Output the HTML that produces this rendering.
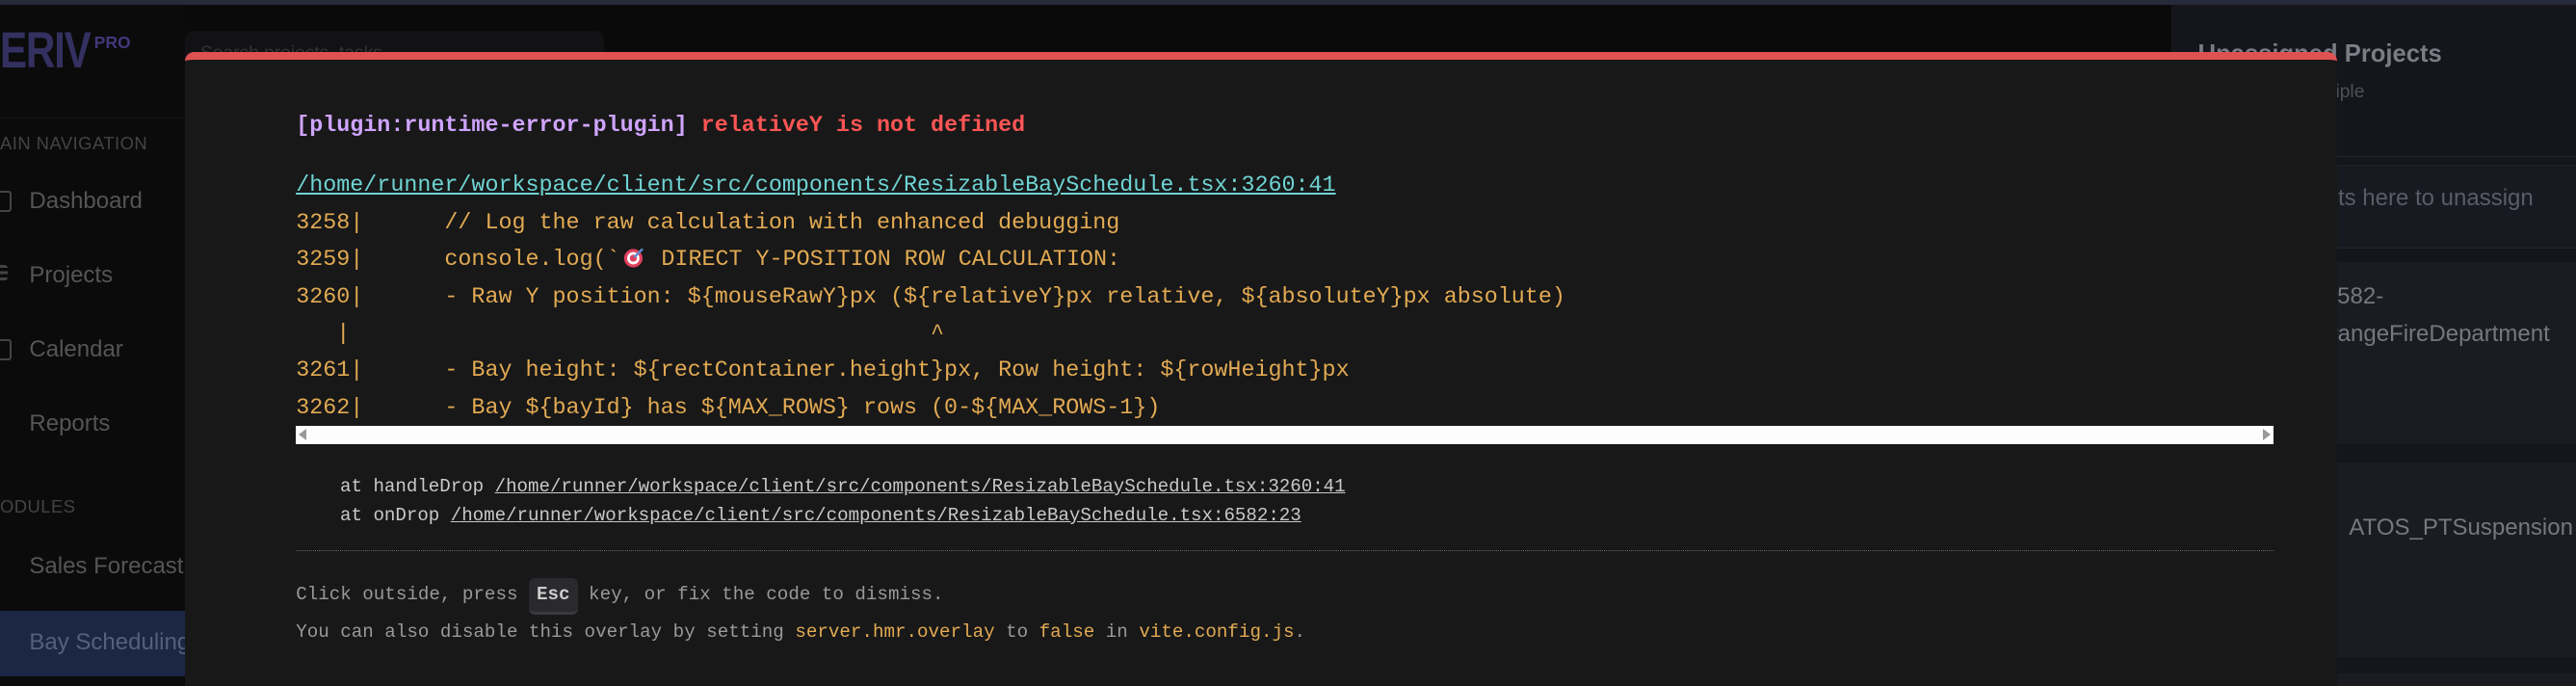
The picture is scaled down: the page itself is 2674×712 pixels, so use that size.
<!DOCTYPE html>
<html><head><meta charset="utf-8">
<style>
html,body{margin:0;padding:0;background:#0b0b0b;overflow:hidden}
body{width:2674px;height:712px}
#root{zoom:1.6;width:1672px;height:445px;position:relative;overflow:hidden;background:#0a0a0b;font-family:"Liberation Sans",sans-serif}
.abs{position:absolute}
.nav{position:absolute;left:19px;font-size:15px;color:#555558;white-space:nowrap}
.sec{position:absolute;left:0;font-size:11.5px;color:#444448;letter-spacing:.3px}
.ico{position:absolute;left:-4px;width:9px;height:11px;border:1.5px solid #444;border-radius:2px}
#ov{position:absolute;left:120px;top:34px;width:1396px;height:406px;background:#181818;border-top:5px solid #e05252;border-radius:6px 6px 0 0;font-family:"Liberation Mono",monospace}
.m{position:absolute;left:72px;white-space:pre;font-size:14.6px;line-height:24px}
.y{color:#e2aa53}
.s{position:absolute;left:72px;white-space:pre;font-size:11.95px;line-height:19px;color:#c9c9c9}
.s u{color:#c9c9c9}
.t{position:absolute;left:72px;white-space:pre;font-size:12px;line-height:20px;color:#999}
</style></head><body><div id="root">
<div class="abs" style="left:0;top:0;width:1672px;height:3px;background:#262a3b"></div>
<div class="abs" style="left:0;top:3px;width:120px;height:442px;background:#0b0b0b"></div>
<div class="abs" style="left:0;top:14px;font-size:33px;font-weight:bold;color:#343060;letter-spacing:-1px;transform:scaleX(.8);transform-origin:left">ERIV</div>
<div class="abs" style="left:61px;top:21px;font-size:11px;color:#41387a;font-weight:bold">PRO</div>
<div class="abs" style="left:120px;top:20px;width:272px;height:30px;background:#121215;border-radius:6px"></div>
<div class="abs" style="left:130px;top:28px;font-size:12px;color:#333">Search projects, tasks...</div>
<div class="abs" style="left:0;top:76px;width:120px;height:1px;background:#141414"></div>
<div class="sec" style="top:86px">AIN NAVIGATION</div>
<div class="ico" style="top:124px"></div><div class="nav" style="top:122px">Dashboard</div>
<div class="ico" style="top:172px;border:none;height:10px;background:linear-gradient(#444 0 2px,transparent 2px 4px,#444 4px 6px,transparent 6px 8px,#444 8px 10px)"></div><div class="nav" style="top:170px">Projects</div>
<div class="ico" style="top:220px"></div><div class="nav" style="top:218px">Calendar</div>
<div class="nav" style="top:266px">Reports</div>
<div class="sec" style="top:322px">ODULES</div>
<div class="nav" style="top:359px">Sales Forecast</div>
<div class="abs" style="left:0;top:396px;width:120px;height:43px;background:#1c2745"></div>
<div class="nav" style="top:408px;color:#56607a">Bay Scheduling</div>
<div class="abs" style="left:1409px;top:3px;width:263px;height:442px;background:#14161b"></div>
<div class="abs" style="left:1426px;top:26px;font-size:16px;font-weight:bold;color:#7a7d86;white-space:nowrap">Unassigned Projects</div>
<div class="abs" style="left:1450px;top:53px;font-size:12px;color:#4e5058;white-space:nowrap">Drag to multiple</div>
<div class="abs" style="left:1409px;top:101px;width:263px;height:1px;background:#22252c"></div>
<div class="abs" style="left:1418px;top:107px;width:254px;height:53px;background:#171a20;border-top:1px solid #22252c;border-bottom:1px solid #22252c"></div>
<div class="abs" style="left:1476px;top:120px;font-size:15px;color:#5a5d66;white-space:nowrap">projects here to unassign</div>
<div class="abs" style="left:1418px;top:170px;width:254px;height:118px;background:#1a1c22"></div>
<div class="abs" style="left:1508px;top:184px;font-size:15px;color:#75787f;white-space:nowrap">2582-</div>
<div class="abs" style="left:1500px;top:208px;font-size:15px;color:#75787f;white-space:nowrap">OrangeFireDepartment</div>
<div class="abs" style="left:1418px;top:300px;width:254px;height:126px;background:#1a1c22"></div>
<div class="abs" style="left:1524px;top:334px;font-size:15px;color:#75787f;white-space:nowrap">ATOS_PTSuspension</div>
<div class="abs" style="left:1418px;top:437px;width:254px;height:8px;background:#1a1c22"></div>
<div id="ov">
<div class="m" style="top:31px;font-weight:bold"><span style="color:#cfa4ff">[plugin:runtime-error-plugin]</span> <span style="color:#ff5555">relativeY is not defined</span></div>
<div class="m" style="top:70px;color:#6fd3d3"><u>/home/runner/workspace/client/src/components/ResizableBaySchedule.tsx:3260:41</u></div>
<div class="m y" style="top:94px">3258|      // Log the raw calculation with enhanced debugging
3259|      console.log(`<span style="display:inline-block;width:14px;height:14px;vertical-align:-2px;margin:0 2px"><svg width="14" height="14" viewBox="0 0 14 14"><circle cx="6.5" cy="7.5" r="6" fill="#e0405e"/><circle cx="6.5" cy="7.5" r="4" fill="#fff"/><circle cx="6.5" cy="7.5" r="2.3" fill="#e0405e"/><path d="M7 7L12.5 1.5" stroke="#5a8fd0" stroke-width="1.5"/></svg></span> DIRECT Y-POSITION ROW CALCULATION:
3260|      - Raw Y position: ${mouseRawY}px (${relativeY}px relative, ${absoluteY}px absolute)
   |                                           ^
3261|      - Bay height: ${rectContainer.height}px, Row height: ${rowHeight}px
3262|      - Bay ${bayId} has ${MAX_ROWS} rows (0-${MAX_ROWS-1})</div>
<div class="abs" style="left:72px;top:237px;width:1283px;height:12px;background:#fcfcfc"></div>
<div class="abs" style="left:74px;top:239px;width:0;height:0;border-top:4px solid transparent;border-bottom:4px solid transparent;border-right:5px solid #999"></div>
<div class="abs" style="left:1348px;top:239px;width:0;height:0;border-top:4px solid transparent;border-bottom:4px solid transparent;border-left:5px solid #999"></div>
<div class="s" style="top:267px">    at handleDrop <u>/home/runner/workspace/client/src/components/ResizableBaySchedule.tsx:3260:41</u>
    at onDrop <u>/home/runner/workspace/client/src/components/ResizableBaySchedule.tsx:6582:23</u></div>
<div class="abs" style="left:72px;top:318px;width:1283px;border-top:1px dotted #666"></div>
<div class="t" style="top:336px">Click outside, press <span style="display:inline-block;background:#2a2a2e;border-radius:4px;padding:0 5px;line-height:22px;color:#ccc;font-weight:bold;border-bottom:2px solid #3a3a3e">Esc</span> key, or fix the code to dismiss.</div>
<div class="t" style="top:361px">You can also disable this overlay by setting <span style="color:#e2aa53">server.hmr.overlay</span> to <span style="color:#e2aa53">false</span> in <span style="color:#e2aa53">vite.config.js</span>.</div>
</div>
</div></body></html>
